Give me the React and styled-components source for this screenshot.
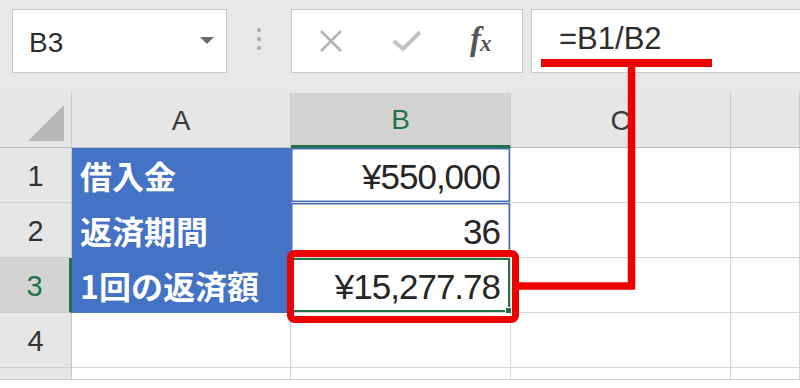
import React from "react";
import styled, { createGlobalStyle, css } from "styled-components";

const GlobalStyle = createGlobalStyle`
  html, body { margin: 0; padding: 0; background: #ffffff; }
  body { font-family: "Liberation Sans", "Noto Sans CJK JP", sans-serif; }
  * { box-sizing: border-box; }
`;

const Page = styled.div`
  position: relative;
  width: 800px;
  height: 388px;
  overflow: hidden;
  background: #ffffff;
`;

const Toolbar = styled.div`
  display: flex;
  align-items: flex-start;
  height: 93px;
  padding: 9px 0 0 12px;
  background: #e8e8e8;
`;

const NameBox = styled.div`
  width: 215px;
  height: 64px;
  background: #fff;
  border: 1px solid #c6c6c6;
  display: flex;
  align-items: center;
  justify-content: space-between;
  padding: 4px 12px 0 16px;
  font-size: 28px;
  color: #2d2d2d;
`;

const Caret = styled.span`
  width: 0;
  height: 0;
  border-left: 7px solid transparent;
  border-right: 7px solid transparent;
  border-top: 7px solid #6b6b6b;
  margin-top: -6px;
`;

const Grip = styled.div`
  width: 64px;
  height: 64px;
  display: flex;
  flex-direction: column;
  align-items: center;
  justify-content: center;
  gap: 5px;
  padding-bottom: 4px;
`;

const GripDot = styled.span`
  width: 4px;
  height: 4px;
  border-radius: 50%;
  background: #a8a8a8;
`;

const ButtonBox = styled.div`
  width: 232px;
  height: 64px;
  background: #fff;
  border: 1px solid #c6c6c6;
  display: flex;
  align-items: center;
  padding: 0 0 0 13px;
`;

const IconButton = styled.span`
  display: flex;
  align-items: center;
  justify-content: center;
  width: ${(p) => p.$w}px;
  height: 30px;
`;

const Fx = styled.span`
  font-family: "Liberation Serif", serif;
  font-style: italic;
  font-weight: 700;
  font-size: 33px;
  color: #555;
  letter-spacing: -1px;
  margin-left: 13px;
  margin-top: -4px;
  & > sub {
    font-size: 23px;
    vertical-align: baseline;
    position: relative;
    top: 1px;
  }
`;

const FormulaInput = styled.div`
  flex: 1;
  height: 64px;
  margin-left: 8px;
  margin-right: -2px;
  background: #fff;
  border: 1px solid #c6c6c6;
  display: flex;
  align-items: center;
  padding: 0 0 4px 27px;
  font-size: 31px;
  color: #2d2d2d;
`;

const Grid = styled.div`
  display: grid;
  grid-template-columns: 72px 219px 220px 220px 69px;
  grid-template-rows: 55px 55px 55px 55px 55px 12px;
`;

const HeaderCell = styled.div`
  position: relative;
  display: flex;
  align-items: center;
  justify-content: center;
  background: #e6e6e6;
  border-right: 1px solid #c9c9c9;
  border-bottom: 1px solid #bdbdbd;
  font-size: 28px;
  color: #3a3a3a;
  padding-top: 2px;
  ${(p) =>
    p.$active &&
    css`
      background: #d3d3d3;
      color: #217346;
      border-bottom: 3px solid #217346;
    `}
`;

const Corner = styled(HeaderCell)`
  align-items: flex-end;
  justify-content: flex-end;
  padding: 0 7px 6px 0;
`;

const Triangle = styled.span`
  width: 36px;
  height: 36px;
  background: #b7b7b7;
  clip-path: polygon(100% 0, 100% 100%, 0 100%);
`;

const RowHeader = styled.div`
  display: flex;
  align-items: center;
  justify-content: center;
  background: #e6e6e6;
  border-right: 1px solid #c9c9c9;
  border-bottom: 1px solid #cfcfcf;
  font-size: 29px;
  color: #333;
  padding-top: 3px;
  ${(p) =>
    p.$active &&
    css`
      background: #d3d3d3;
      color: #217346;
      border-right: 3px solid #217346;
    `}
`;

const Cell = styled.div`
  position: relative;
  display: flex;
  align-items: center;
  justify-content: ${(p) => (p.$right ? "flex-end" : "flex-start")};
  background: #fff;
  border-right: 1px solid #d6d6d6;
  border-bottom: 1px solid #d6d6d6;
  padding: 3px 10px 0 8px;
  font-size: 35px;
  letter-spacing: -1px;
  color: #262626;
  ${(p) =>
    p.$fill &&
    css`
      background: #4472c4;
      border-color: #4472c4;
      color: #fff;
      font-family: "Noto Sans CJK JP", sans-serif;
      font-weight: 700;
      font-size: 32px;
      letter-spacing: 0;
      padding-top: 0;
    `}
  ${(p) =>
    p.$range &&
    css`
      box-shadow: inset 0 0 0 1.5px #4a6fba;
    `}
  ${(p) =>
    p.$selected &&
    css`
      box-shadow: inset 0 0 0 2px #217346;
      &::after {
        content: "";
        position: absolute;
        right: -3px;
        bottom: -3px;
        width: 6px;
        height: 6px;
        background: #217346;
        border: 1px solid #fff;
      }
    `}
`;

const Overlay = styled.svg`
  position: absolute;
  left: 0;
  top: 0;
  pointer-events: none;
`;

const rows = [
  { n: "1", a: "借入金", b: "¥550,000", range: true },
  { n: "2", a: "返済期間", b: "36", range: true },
  { n: "3", a: "1回の返済額", b: "¥15,277.78", selected: true },
  { n: "4" },
  { n: "" },
];

export default function App() {
  return (
    <Page>
      <GlobalStyle />
      <Toolbar>
        <NameBox>
          <span>B3</span>
          <Caret />
        </NameBox>
        <Grip>
          <GripDot />
          <GripDot />
          <GripDot />
        </Grip>
        <ButtonBox>
          <IconButton $w={52}>
            <svg width="24" height="22" viewBox="0 0 24 22">
              <path d="M2 1 L22 21 M22 1 L2 21" stroke="#b3b3b3" strokeWidth="2.6" fill="none" />
            </svg>
          </IconButton>
          <IconButton $w={100}>
            <svg width="30" height="22" viewBox="0 0 30 22">
              <path d="M2 11 L11 19 L28 2" stroke="#c4c4c4" strokeWidth="4" fill="none" strokeLinejoin="round" />
            </svg>
          </IconButton>
          <Fx>
            f<sub>x</sub>
          </Fx>
        </ButtonBox>
        <FormulaInput>=B1/B2</FormulaInput>
      </Toolbar>
      <Grid>
        <Corner>
          <Triangle />
        </Corner>
        <HeaderCell>A</HeaderCell>
        <HeaderCell $active>B</HeaderCell>
        <HeaderCell>C</HeaderCell>
        <HeaderCell />
        {rows.map((r, i) => (
          <React.Fragment key={i}>
            <RowHeader $active={r.selected}>{r.n}</RowHeader>
            <Cell $fill={!!r.a}>{r.a}</Cell>
            <Cell $right $range={r.range} $selected={r.selected}>
              {r.b}
            </Cell>
            <Cell />
            <Cell />
          </React.Fragment>
        ))}
      </Grid>
      <Overlay width="800" height="388" viewBox="0 0 800 388">
        <rect x="290.5" y="253.5" width="225" height="66" rx="4" fill="none" stroke="#ee0000" strokeWidth="7" />
        <path d="M519 286 H631.5 V63" fill="none" stroke="#ee0000" strokeWidth="7.5" />
        <path d="M541 63 H712" fill="none" stroke="#ee0000" strokeWidth="8" />
      </Overlay>
    </Page>
  );
}
